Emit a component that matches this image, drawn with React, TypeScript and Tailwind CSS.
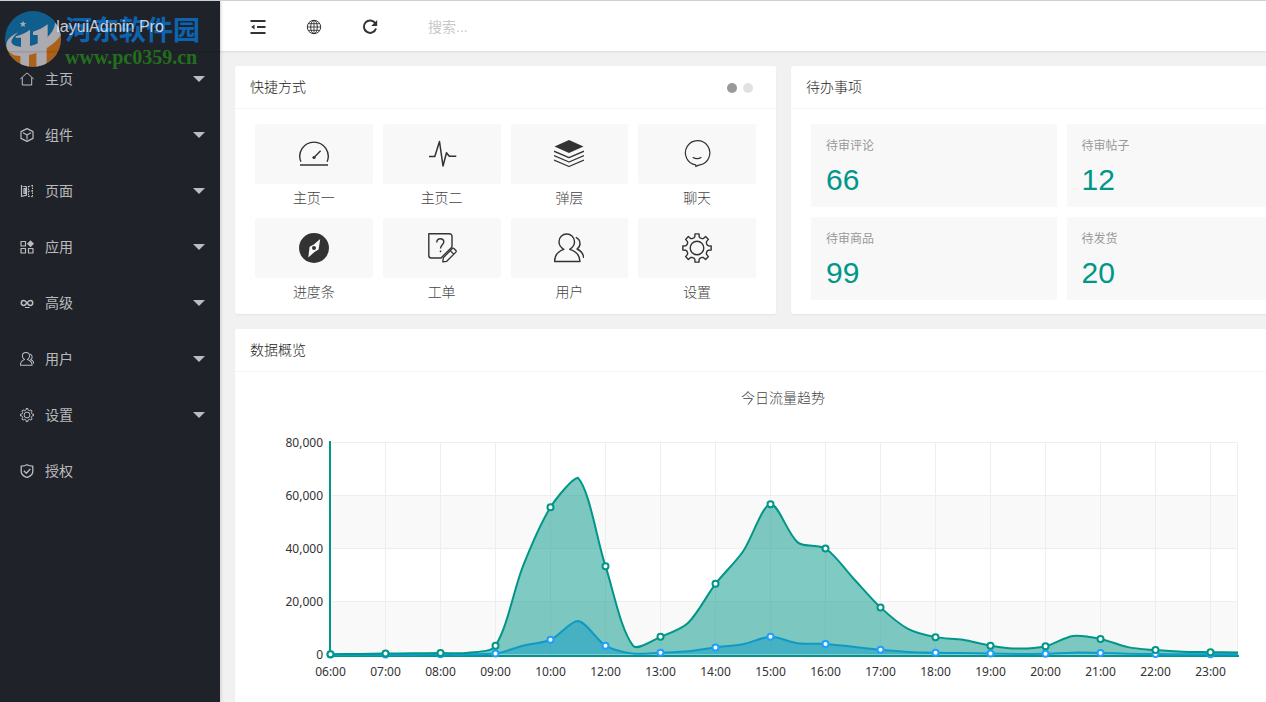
import type { ReactNode } from "react";

const cjk = "font-['Liberation_Sans','Noto_Sans_CJK_SC',sans-serif]";

// ---------- icons ----------

function gearPath(c: number, outer: number, inner: number) {
  const pts: string[] = [];
  for (let i = 0; i < 8; i++) {
    const steps: [number, number][] = [
      [-17, inner],
      [-11, inner + outer * 0.06],
      [-8, outer],
      [8, outer],
      [11, inner + outer * 0.06],
      [17, inner],
    ];
    for (const [deg, r] of steps) {
      const a = ((i * 45 + deg) * Math.PI) / 180;
      pts.push(`${(c + r * Math.cos(a)).toFixed(2)} ${(c + r * Math.sin(a)).toFixed(2)}`);
    }
  }
  return `M${pts.join("L")}Z`;
}

function Glyph({ size, sw = 1, cls, children }: { size: number; sw?: number; cls: string; children: ReactNode }) {
  return (
    <svg
      viewBox={`0 0 ${size} ${size}`}
      className={`${cls} shrink-0`}
      fill="none"
      stroke="currentColor"
      strokeWidth={sw}
      strokeLinejoin="round"
      aria-hidden="true"
    >
      {children}
    </svg>
  );
}

const userShape = (
  <>
    <path d="M9.8 16.3C6.8 14.8 5 12 5 8.6 5 4.2 8.4 1 12.7 1s7.8 3.2 7.8 7.6c0 3.400-1.800 6.200-4.800 7.700C21.500 18 25.800 22.500 26 28.500H.5C.7 22.500 4.500 18 9.800 16.300Z" />
    <path d="M21.800 4.300c2.600 1.300 4.200 3.600 4.200 6.200 0 2.300-1.100 4.300-3 5.500 4 1.800 6.500 5 6.700 9" />
  </>
);

const menuIcons: Record<string, ReactNode> = {
  home: <path d="M.3 7 7 .9 13.700 7M2.300 5.500V13h9.400V5.500" />,
  cube: <path d="M7 .6 13 3.600v6.800L7 13.400 1 10.400V3.600ZM3 4.800l4 2.200 4-2.200M7 7v4.500" strokeWidth={1.200} />,
  pages: (
    <>
      <path d="M1.500 1v12M1.500 1.500l5 1.300v8.400l-5 1.300M4 4.500h1.500v5H4z" strokeWidth={1.200} />
      <path d="M8.500 2v11M8.500 2.500l4-1M12.500 1v12M8.500 12l4 .8M8.500 7h4" strokeDasharray="1.500 1" />
    </>
  ),
  apps: (
    <>
      <path d="M1 1.500h4.500V6H1zM1 8.500h4.500V13H1zM8.500 8.500H13V13H8.500z" strokeWidth={1.200} />
      <path d="M10.500.2 14 3.700 10.500 7.200 7 3.700z" fill="currentColor" stroke="none" />
    </>
  ),
  infinity: (
    <>
      <path
        d="M7 7C5.800 5.300 5 4.600 3.700 4.600a2.400 2.400 0 0 0 0 4.800C5 9.400 5.800 8.700 7 7s2-2.400 3.300-2.400a2.400 2.400 0 0 1 0 4.800C9 9.400 8.200 8.700 7 7Z"
        strokeWidth={1.500}
      />
      <path d="M5 11.500h4.500" />
    </>
  ),
  user: <g transform="scale(.467)" strokeWidth={2.200}>{userShape}</g>,
  gear: (
    <>
      <path d={gearPath(7, 6.500, 4.900)} />
      <circle cx="7" cy="7" r="2.900" />
    </>
  ),
  shield: (
    <path d="M7 .7c1.800 1 3.600 1.400 5.800 1.400v5.400c0 2.900-2.300 4.700-5.800 6.100-3.500-1.400-5.800-3.200-5.800-6.100V2.100C3.400 2.100 5.200 1.700 7 .7ZM3.800 6.800l2.500 2.400 4-4.200" strokeWidth={1.300} />
  ),
};

const tileIcons: Record<string, ReactNode> = {
  gauge: (
    <>
      <path d="M1.900 22.800A14.200 14.200 0 1 1 28.100 22.800" />
      <path d="M1 26h28M15 18.500l6.600-6.700" />
      <circle cx="15" cy="18.500" r="1.600" fill="currentColor" stroke="none" />
    </>
  ),
  pulse: <path d="M2 17.500h5.800L12.500 2.500 16 27l3.500-13.300 2.800 3.600h7" strokeWidth={1.500} />,
  layers: (
    <>
      <path d="M15 1l14.500 6.500L15 14 .5 7.500z" fill="currentColor" stroke="none" />
      <path d="M0 12.200l15 6.500 15-6.500M0 16.500l15 6.500 15-6.500M0 21l15 6.500 15-6.500" strokeWidth={1.300} />
    </>
  ),
  chat: (
    <path d="M13.800 27.500v-1.600A12.200 12.200 0 1 1 18 25.800c-1.700.4-3 .8-4.200 1.700ZM10.800 18.200c2.500 1.700 6.100 1.700 8.600 0" strokeWidth={1.200} />
  ),
  compass: (
    <>
      <circle cx="15" cy="15" r="15" fill="currentColor" stroke="none" />
      <path d="M21.200 6 19.600 16.500 15.500 19 9.300 24.500 10.600 13.800 14.800 11.500z" fill="#f8f8f8" stroke="none" />
      <circle cx="15" cy="15" r="2" fill="currentColor" stroke="none" />
    </>
  ),
  ticket: (
    <>
      <path d="M1.800.700H22.500a2.500 2.500 0 0 1 2.500 2.500V14L14 25H4.300a2.500 2.500 0 0 1-2.500-2.500Z" />
      <path d="M9.800 9.500c0-2.300 1.400-3.800 3.500-3.800s3.500 1.400 3.500 3.300c0 2.700-3.300 3-3.300 6.500M13.500 17.500v1.800" />
      <path d="M15.800 28.800l.5-4 9-9.300q.8-.6 1.600 0l2 2q.6.8 0 1.600l-9.200 9.200ZM23.200 17.600l3.500 3.500" strokeWidth={1.300} />
    </>
  ),
  user: userShape,
  gear: (
    <>
      <path d={gearPath(15, 14.300, 10.600)} />
      <circle cx="15" cy="15" r="6.800" />
    </>
  ),
};

// ---------- sidebar ----------

const menu = [
  { icon: "home", label: "主页", nested: true },
  { icon: "cube", label: "组件", nested: true },
  { icon: "pages", label: "页面", nested: true },
  { icon: "apps", label: "应用", nested: true },
  { icon: "infinity", label: "高级", nested: true },
  { icon: "user", label: "用户", nested: true },
  { icon: "gear", label: "设置", nested: true },
  { icon: "shield", label: "授权", nested: false },
];

function SiteStamp() {
  return (
    <div className="pointer-events-none absolute left-[5px] top-[10px] flex items-start gap-1">
      <svg viewBox="0 0 168 168" className="h-14 w-14 shrink-0 opacity-70" aria-hidden="true">
        <defs>
          <clipPath id="disc">
            <circle cx="84" cy="84" r="84" />
          </clipPath>
        </defs>
        <g clipPath="url(#disc)">
          <rect width="168" height="168" fill="#0a78b8" />
          <path d="M0 108C40 130 110 115 168 66V168H0Z" fill="#e87c10" />
          <path
            d="M40 64C15 75 2 90 4 108 8 125 25 135 45 135 100 135 150 100 168 72 166 55 160 42 150 35 150 60 120 100 60 108 30 110 15 98 20 88 24 78 32 70 40 64Z"
            fill="#e6e4ea"
          />
          <path d="M32 76C48 72 62 66 75 56V112H48V80H32Z" fill="#e6e4ea" />
          <path d="M84 62C100 58 115 50 128 40V100L98 110V72H84Z" fill="#e6e4ea" />
          <path d="M46 130H72V168H46ZM94 120L125 104V168H94Z" fill="#e6e4ea" />
          <path d="M54 29l3 7 7 1-6 4 2 7-6-4-6 4 2-7-6-4 7-1z" fill="#e6e4ea" />
        </g>
      </svg>
      <div className="flex flex-col opacity-90">
        <span className="text-[27px] leading-9 font-bold text-[#0a6cc0] font-['Noto_Sans_CJK_SC',sans-serif]">河东软件园</span>
        <span className="text-[20px] leading-5 font-bold text-[#23781c] font-['Liberation_Serif',serif]">www.pc0359.cn</span>
      </div>
    </div>
  );
}

function Sidebar() {
  return (
    <aside className="relative z-20 w-[220px] shrink-0 bg-[#20222a] text-white/70 shadow-[1px_0_3px_rgba(0,0,0,0.15)]">
      <SiteStamp />
      <h1 className="relative flex h-[50px] items-center justify-center pt-0.5 text-base text-white/75 shadow-[0_1px_2px_rgba(0,0,0,0.15)]">
        layuiAdmin Pro
      </h1>
      <nav>
        {menu.map((m) => (
          <a key={m.label} href="#" className="flex h-14 items-center pr-[15px] pl-5 text-sm">
            <Glyph size={14} cls="h-3.5 w-3.5">
              {menuIcons[m.icon]}
            </Glyph>
            <span className="ml-[11px] flex-1">{m.label}</span>
            {m.nested && (
              <svg viewBox="0 0 12 6" className="h-1.5 w-3" fill="currentColor" aria-hidden="true">
                <path d="M0 0h12L6 6z" />
              </svg>
            )}
          </a>
        ))}
      </nav>
    </aside>
  );
}

// ---------- top bar ----------

function TopBar() {
  return (
    <header className="relative z-10 flex h-[50px] shrink-0 items-center bg-white pt-0.5 pl-2.5 text-[#333] shadow-[0_1px_2px_rgba(0,0,0,0.1)]">
      <button type="button" aria-label="侧边伸缩" className="flex h-full w-14 items-center justify-center">
        <Glyph size={16} sw={1.800} cls="h-4 w-4">
          <path d="M.5 2h15M7 8h8.500M.500 14h15" />
          <path d="M4.500 5.500v5L1.200 8z" fill="currentColor" stroke="none" />
        </Glyph>
      </button>
      <button type="button" aria-label="前台" className="flex h-full w-14 items-center justify-center">
        <Glyph size={16} cls="h-4 w-4">
          <circle cx="8" cy="8" r="6.700" />
          <ellipse cx="8" cy="8" rx="3.300" ry="6.700" />
          <path d="M8 1.300v13.400M1.300 8h13.400M2.300 4.700h11.400M2.300 11.300h11.400" strokeWidth={0.900} />
        </Glyph>
      </button>
      <button type="button" aria-label="刷新" className="flex h-full w-14 items-center justify-center">
        <Glyph size={16} sw={2} cls="h-4 w-4">
          <path d="M13.300 4.300A6.200 6.200 0 1 0 14 9.500" />
          <path d="M15.200 1v6H9.200z" fill="currentColor" stroke="none" />
        </Glyph>
      </button>
      <input
        type="text"
        aria-label="搜索"
        placeholder="搜索..."
        className="ml-5 h-9 w-52 bg-transparent px-2.5 text-sm outline-none placeholder:text-[#c8c8c8]"
      />
    </header>
  );
}

// ---------- cards ----------

function Card({ title, extra, children }: { title: string; extra?: ReactNode; children: ReactNode }) {
  return (
    <section className="rounded-xs bg-white shadow-[0_1px_2px_rgba(0,0,0,0.06)]">
      <div className="flex h-[43px] items-center justify-between border-b border-[#f6f6f6] px-[15px]">
        <h2 className="text-sm font-light text-[#222]">{title}</h2>
        {extra}
      </div>
      {children}
    </section>
  );
}

const shortcuts = [
  { icon: "gauge", label: "主页一" },
  { icon: "pulse", label: "主页二" },
  { icon: "layers", label: "弹层" },
  { icon: "chat", label: "聊天" },
  { icon: "compass", label: "进度条" },
  { icon: "ticket", label: "工单" },
  { icon: "user", label: "用户" },
  { icon: "gear", label: "设置" },
];

const todos = [
  { label: "待审评论", count: 66 },
  { label: "待审帖子", count: 12 },
  { label: "待审商品", count: 99 },
  { label: "待发货", count: 20 },
];

function Shortcuts() {
  const dots = (
    <div className="flex gap-1.5 pt-0.5 pr-2">
      <button type="button" aria-label="第一页" className="h-2.5 w-2.5 rounded-full bg-[#999]" />
      <button type="button" aria-label="第二页" className="h-2.5 w-2.5 rounded-full bg-[#e2e2e2]" />
    </div>
  );
  return (
    <Card title="快捷方式" extra={dots}>
      <div className="grid grid-cols-4 gap-x-2.5 gap-y-1.5 px-5 pt-[15px] pb-2">
        {shortcuts.map((s) => (
          <a key={s.label} href="#" className="flex flex-col text-center">
            <span className="flex h-[60px] items-center justify-center rounded-xs bg-[#f8f8f8] text-[#333]">
              <Glyph size={30} sw={1.400} cls="h-[30px] w-[30px]">
                {tileIcons[s.icon]}
              </Glyph>
            </span>
            <span className="text-sm leading-7 font-light text-[#444]">{s.label}</span>
          </a>
        ))}
      </div>
    </Card>
  );
}

function Todos() {
  return (
    <Card title="待办事项">
      <div className="grid grid-cols-2 gap-2.5 px-5 pt-[15px]">
        {todos.map((t) => (
          <a key={t.label} href="#" className="flex h-[83px] flex-col rounded-xs bg-[#f8f8f8] px-[15px] pt-3">
            <span className="text-xs leading-5 text-[#999]">{t.label}</span>
            <span className="mt-1.5 text-3xl leading-9 text-[#009688]">{t.count}</span>
          </a>
        ))}
      </div>
    </Card>
  );
}

// ---------- chart ----------

const pv = [
  111, 222, 333, 444, 555, 666, 3333, 33333, 55555, 66666, 33333, 3333, 6666, 11888, 26666, 38888, 56666, 42222, 39999,
  28888, 17777, 9666, 6555, 5555, 3333, 2222, 3111, 6999, 5888, 2777, 1666, 999, 888, 777,
];
const uv = [
  11, 22, 33, 44, 55, 66, 333, 3333, 5555, 12666, 3333, 333, 666, 1188, 2666, 3888, 6666, 4222, 3999, 2888, 1777, 966,
  655, 555, 333, 222, 311, 699, 588, 277, 166, 99, 88, 77,
];
const hours = [
  "06:00", "07:00", "08:00", "09:00", "10:00", "12:00", "13:00", "14:00", "15:00",
  "16:00", "17:00", "18:00", "19:00", "20:00", "21:00", "22:00", "23:00",
];

const X0 = 80.5;
const STEP = 27.5;
const TOP = 55.5;
const BASE = 267.5;
const RIGHT = 987.5;

type Pt = [number, number];
const toPoints = (values: number[]): Pt[] => values.map((v, i) => [X0 + i * STEP, BASE - (v / 80000) * (BASE - TOP)]);

// Bezier through every point; control points never leave the range of the data.
function smoothLine(pts: Pt[], smooth = 0.3) {
  const ys = pts.map((p) => p[1]);
  const lo = Math.min(...ys);
  const hi = Math.max(...ys);
  const clamp = (y: number) => Math.max(lo, Math.min(hi, y));
  const ctrl = pts.map((p, i) => {
    const prev = pts[i - 1];
    const next = pts[i + 1];
    if (!prev || !next) return [p, p];
    const vx = (next[0] - prev[0]) * smooth;
    const vy = (next[1] - prev[1]) * smooth;
    const d0 = Math.hypot(p[0] - prev[0], p[1] - prev[1]);
    const d1 = Math.hypot(p[0] - next[0], p[1] - next[1]);
    const a = d0 / (d0 + d1);
    return [
      [p[0] - vx * a, clamp(p[1] - vy * a)],
      [p[0] + vx * (1 - a), clamp(p[1] + vy * (1 - a))],
    ];
  });
  let d = `M${pts[0].join(" ")}`;
  for (let i = 1; i < pts.length; i++) {
    d += `C${ctrl[i - 1][1].join(" ")} ${ctrl[i][0].join(" ")} ${pts[i].join(" ")}`;
  }
  return d;
}

// UV sits underneath, so it is drawn first
const series = [
  { name: "UV", color: "#1e9fff", pts: toPoints(uv) },
  { name: "PV", color: "#009688", pts: toPoints(pv) },
];

function TrafficChart() {
  return (
    <svg
      viewBox="0 0 1067 332"
      className="block w-full font-['Noto_Sans','Noto_Sans_CJK_SC',sans-serif]"
      role="img"
      aria-label="今日流量趋势"
    >
      <text x="533" y="16" textAnchor="middle" fontSize="14" fontWeight="300" fill="#444">
        今日流量趋势
      </text>
      <rect x={X0} y={TOP + 53} width={RIGHT - X0} height="53" fill="#f9f9f9" />
      <rect x={X0} y={TOP + 159} width={RIGHT - X0} height="53" fill="#f9f9f9" />
      <g stroke="#eee">
        {[0, 1, 2, 3, 4].map((i) => (
          <line key={i} x1={X0} x2={RIGHT} y1={TOP + i * 53} y2={TOP + i * 53} />
        ))}
        {hours.map((h, i) => (
          <line key={h} x1={X0 + i * 55} x2={X0 + i * 55} y1={TOP} y2={BASE} />
        ))}
        <line x1={RIGHT} x2={RIGHT} y1={TOP} y2={BASE} />
      </g>
      <g stroke="#009688" strokeWidth="2">
        <line x1="80" x2="80" y1="54" y2="270" />
        <line x1="79" x2="989" y1="269" y2="269" />
      </g>
      {series.map((s) => (
        <g key={s.name}>
          <path d={`${smoothLine(s.pts)}L${RIGHT} ${BASE}L${X0} ${BASE}Z`} fill={s.color} fillOpacity="0.5" />
          <path d={smoothLine(s.pts)} fill="none" stroke={s.color} strokeWidth="2" />
        </g>
      ))}
      {series.map((s) => (
        <g key={s.name} fill="#fff" stroke={s.color} strokeWidth="2">
          {s.pts
            .filter((_, i) => i % 2 === 0)
            .map(([x, y]) => (
              <circle key={x} cx={x} cy={y} r="3" />
            ))}
        </g>
      ))}
      <g fontSize="12" fill="#333">
        {["80,000", "60,000", "40,000", "20,000", "0"].map((t, i) => (
          <text key={t} x="73" y={60 + i * 53} textAnchor="end">
            {t}
          </text>
        ))}
        {hours.map((h, i) => (
          <text key={h} x={X0 + i * 55} y="289" textAnchor="middle">
            {h}
          </text>
        ))}
      </g>
    </svg>
  );
}

export default function App() {
  return (
    <div className={`flex h-screen overflow-hidden border-t border-[#cfd2d2] bg-[#f1f1f1] ${cjk}`}>
      <Sidebar />
      <div className="flex min-w-0 flex-1 flex-col">
        <TopBar />
        <main className="flex-1 overflow-auto [scrollbar-width:none]">
          <div className="flex min-w-[1127px] flex-col gap-[15px] p-[15px]">
            <div className="grid grid-cols-2 gap-[15px]">
              <Shortcuts />
              <Todos />
            </div>
            <Card title="数据概览">
              <div className="p-[15px]">
                <TrafficChart />
              </div>
            </Card>
          </div>
        </main>
      </div>
    </div>
  );
}
